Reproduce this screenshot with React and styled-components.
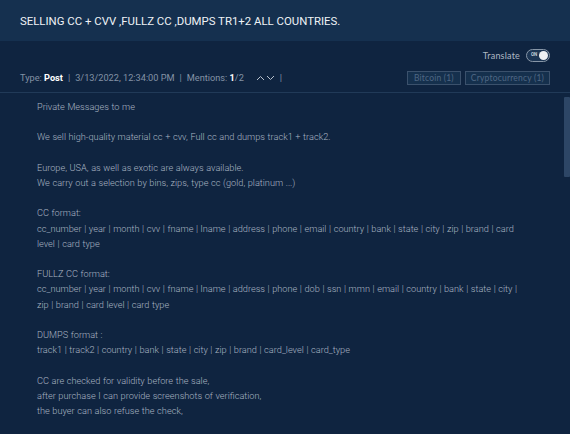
import React from "react";
import styled, { createGlobalStyle } from "styled-components";

const GlobalStyle = createGlobalStyle`
  html, body { margin: 0; padding: 0; background: #0f2440; }
  body { font-family: Roboto, "Liberation Sans", sans-serif; }
  * { box-sizing: border-box; }
`;

const Page = styled.div`
  width: 570px;
  height: 434px;
  overflow: hidden;
  display: flex;
  flex-direction: column;
  background: #0f2440;
`;

const Header = styled.header`
  height: 41px;
  flex: none;
  background: #15304f;
  display: flex;
  align-items: center;
  padding: 0 20px;
`;

const Title = styled.h1`
  margin: 0;
  font-size: 11.4px;
  font-weight: 400;
  color: #eef2f6;
`;

const Toolbar = styled.div`
  flex: none;
  padding: 0 20px 7px 20px;
  border-bottom: 1px solid #213a58;
  display: flex;
  flex-direction: column;
`;

const TranslateRow = styled.div`
  display: flex;
  justify-content: flex-end;
  align-items: center;
  gap: 6px;
  margin-top: 8px;
  height: 13px;
`;

const TranslateLabel = styled.span`
  font-family: Lato, "Open Sans", sans-serif;
  font-size: 9px;
  color: #aeb8c4;
  letter-spacing: 0.2px;
`;

const Toggle = styled.div`
  width: 24px;
  height: 13px;
  border: 1px solid #8796a7;
  border-radius: 7px;
  display: flex;
  align-items: center;
  justify-content: space-between;
  padding: 0 1px 0 4px;
  background: #1c3553;
`;

const ToggleText = styled.span`
  font-size: 4.5px;
  font-weight: 700;
  color: #c8d0da;
  line-height: 1;
`;

const Knob = styled.span`
  width: 9px;
  height: 9px;
  border-radius: 50%;
  background: #eef1f4;
`;

const MetaRow = styled.div`
  margin-top: 8px;
  height: 15px;
  display: flex;
  align-items: center;
  justify-content: space-between;
`;

const Meta = styled.div`
  display: flex;
  align-items: center;
  font-size: 9.2px;
  color: #8392a5;
  white-space: nowrap;
`;

const Strong = styled.b`
  color: #ffffff;
  font-weight: 700;
`;

const Sep = styled.span`
  margin: 0 ${(p) => p.$gap ?? 5}px;
  color: #8392a5;
`;

const Arrows = styled.span`
  display: inline-flex;
  align-items: center;
  gap: 1px;
  margin-left: 12px;
`;

const Tags = styled.div`
  display: flex;
  gap: 4px;
`;

const Tag = styled.span`
  height: 14px;
  padding: 0 ${(p) => p.$pad ?? 5}px;
  border: 1px solid #3b516c;
  background: #15304d;
  font-family: Lato, "Open Sans", sans-serif;
  font-size: 8.5px;
  color: #4f6784;
  display: flex;
  align-items: center;
  letter-spacing: 0.2px;
`;

const Content = styled.div`
  flex: 1;
  display: flex;
  min-height: 0;
`;

const Body = styled.div`
  flex: 1;
  padding: 6px 39px 0 37px;
  font-size: 9.2px;
  font-weight: 300;
  line-height: 15.2px;
  word-spacing: 0.35px;
  color: #a9b4c2;
  white-space: pre-line;
  overflow: hidden;
`;

const Track = styled.div`
  width: 6px;
  flex: none;
  padding-top: 4px;
`;

const Thumb = styled.div`
  height: 80px;
  background: #2d4666;
  border-radius: 1px;
`;

const Chevron = ({ up }) => (
  <svg width="9" height="6" viewBox="0 0 9 6">
    <path
      d={up ? "M1 5 L4.5 1.5 L8 5" : "M1 1 L4.5 4.5 L8 1"}
      fill="none"
      stroke="#b7c1cd"
      strokeWidth="1"
    />
  </svg>
);

const text = `Private Messages to me

We sell high-quality material cc + cvv, Full cc and dumps track1 + track2.

Europe, USA, as well as exotic are always available.
We carry out a selection by bins, zips, type cc (gold, platinum ...)

CC format:
cc_number | year | month | cvv | fname | lname | address | phone | email | country | bank | state | city | zip | brand | card level | card type

FULLZ CC format:
cc_number | year | month | cvv | fname | lname | address | phone | dob | ssn | mmn | email | country | bank | state | city | zip | brand | card level | card type

DUMPS format :
track1 | track2 | country | bank | state | city | zip | brand | card_level | card_type

CC are checked for validity before the sale,
after purchase I can provide screenshots of verification,
the buyer can also refuse the check,

`;

export default function App() {
  return (
    <>
      <GlobalStyle />
      <Page>
        <Header>
          <Title>SELLING CC + CVV ,FULLZ CC ,DUMPS TR1+2 ALL COUNTRIES.</Title>
        </Header>
        <Toolbar>
          <TranslateRow>
            <TranslateLabel>Translate</TranslateLabel>
            <Toggle>
              <ToggleText>ON</ToggleText>
              <Knob />
            </Toggle>
          </TranslateRow>
          <MetaRow>
            <Meta>
              Type:&nbsp;<Strong>Post</Strong>
              <Sep>|</Sep>
              3/13/2022, 12:34:00 PM
              <Sep>|</Sep>
              Mentions:&nbsp;<Strong>1</Strong>/2
              <Arrows>
                <Chevron up />
                <Chevron />
              </Arrows>
              <Sep $gap={5}>|</Sep>
            </Meta>
            <Tags>
              <Tag $pad={6}>Bitcoin (1)</Tag>
              <Tag>Cryptocurrency (1)</Tag>
            </Tags>
          </MetaRow>
        </Toolbar>
        <Content>
          <Body>{text}</Body>
          <Track>
            <Thumb />
          </Track>
        </Content>
      </Page>
    </>
  );
}
